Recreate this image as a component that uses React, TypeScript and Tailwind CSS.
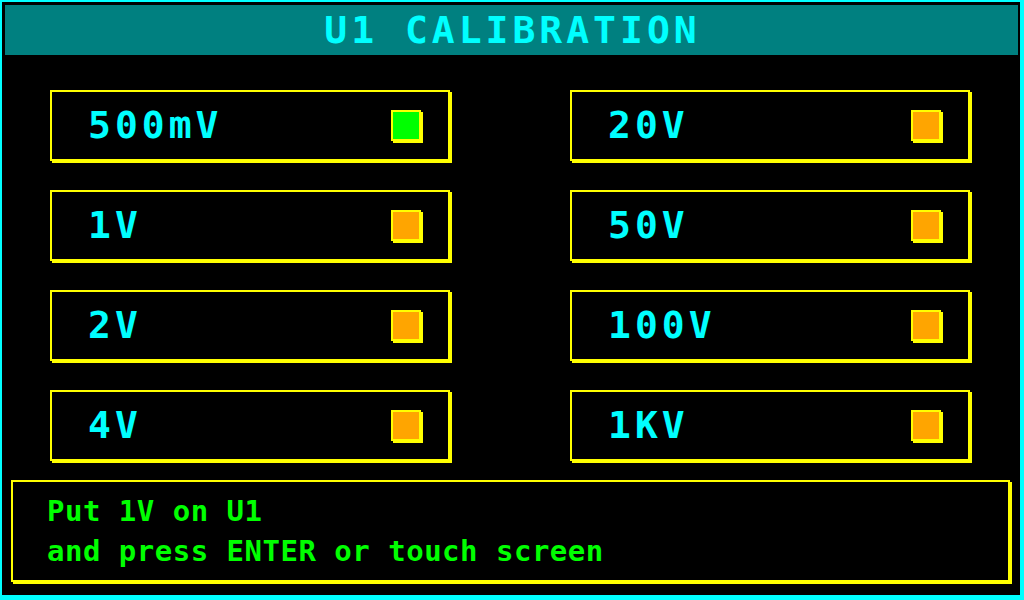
import React from "react";

const left = [
  { label: "500mV", on: true },
  { label: "1V", on: false },
  { label: "2V", on: false },
  { label: "4V", on: false },
];
const right = [
  { label: "20V", on: false },
  { label: "50V", on: false },
  { label: "100V", on: false },
  { label: "1KV", on: false },
];

function Btn({ label, on }: { label: string; on: boolean }) {
  return (
    <div className="h-[71px] w-[400px] border-2 border-[#ffff00] shadow-[2px_2px_0_#ffff00] flex items-center justify-between pl-[36px] pr-[27px] pb-[1px] bg-black">
      <span className="text-[38px] leading-[38px] tracking-[4px] font-bold text-[#00ffff]">
        {label}
      </span>
      <div
        className={
          "w-[30px] h-[31px] border-2 border-[#ffff00] shadow-[2px_2px_0_#ffff00] " +
          (on ? "bg-[#00ff00]" : "bg-[#ffa500]")
        }
      />
    </div>
  );
}

export default function App() {
  const rows = left.map((l, i) => [l, right[i]]);
  return (
    <div
      className="w-[1024px] h-[600px] bg-black border-l-2 border-t-2 border-r-4 border-b-[5px] border-[#00ffff] flex flex-col overflow-hidden"
      style={{ fontFamily: '"DejaVu Sans Mono", monospace' }}
    >
      <div className="mt-[3px] ml-[3px] mr-[2px] h-[50px] bg-[#008080] flex items-center justify-center">
        <span className="text-[38px] leading-[38px] tracking-[4px] font-bold text-[#00ffff] pl-[2px]">
          U1 CALIBRATION
        </span>
      </div>
      <div className="mt-[35px] ml-[48px] grid grid-cols-[400px_400px] gap-x-[120px] gap-y-[29px]">
        {rows.map(([a, b], i) => (
          <React.Fragment key={i}>
            <Btn label={a.label} on={a.on} />
            <Btn label={b.label} on={b.on} />
          </React.Fragment>
        ))}
      </div>
      <div className="mt-[19px] ml-[9px] w-[999px] h-[102px] border-2 border-[#ffff00] shadow-[2px_2px_0_#ffff00] pt-[9px] pl-[34px] text-[#00ff00] text-[29px] leading-[40px] tracking-[0.5px] font-bold">
        <div>Put 1V on U1</div>
        <div>and press ENTER or touch screen</div>
      </div>
    </div>
  );
}
